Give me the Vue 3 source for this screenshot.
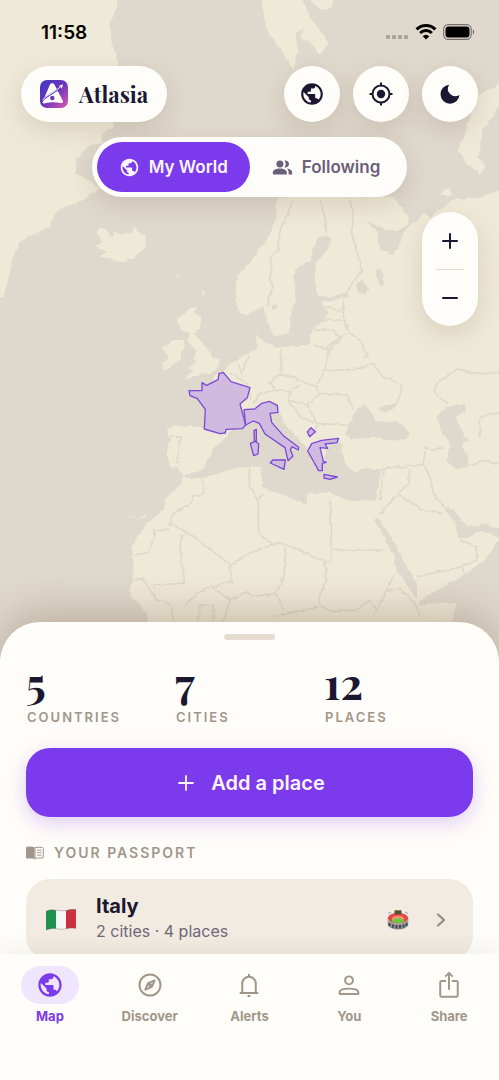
<template>
  <div class="screen">
    <main class="stage">
      <svg class="map" viewBox="0 0 1497 1980" preserveAspectRatio="xMidYMin slice" aria-hidden="true">
        <defs>
          <filter id="coast" x="-5%" y="-5%" width="110%" height="110%" color-interpolation-filters="sRGB">
            <feTurbulence type="fractalNoise" baseFrequency="0.05" numOctaves="2" seed="4" />
            <feDisplacementMap in="SourceGraphic" scale="12" xChannelSelector="R" yChannelSelector="G" />
            <feGaussianBlur stdDeviation="1.2" />
          </filter>
        </defs>
        <rect class="sea" width="1497" height="1980" />
        <g filter="url(#coast)">
          <polygon v-for="(p, i) in land" :key="'l' + i" class="land" :points="p" />
          <polygon v-for="(p, i) in water" :key="'w' + i" class="sea" :points="p" />
          <polyline v-for="(p, i) in borders" :key="'b' + i" class="border" :points="p" />
        </g>
        <g transform="translate(540 1080)">
          <polygon v-for="(p, i) in visited" :key="'v' + i" class="visited" :points="p" />
        </g>
      </svg>

      <div class="status">
        <span class="time">11:58</span>
        <span class="signals">
          <svg width="23" height="16" viewBox="0 0 23 16" aria-hidden="true">
            <g fill="#aaa398">
              <rect x="0" y="11" width="4" height="4" rx="1" />
              <rect x="6" y="11" width="4" height="4" rx="1" />
              <rect x="12" y="11" width="4" height="4" rx="1" />
              <rect x="18" y="11" width="4" height="4" rx="1" />
            </g>
          </svg>
          <svg width="22" height="16" viewBox="0 0 22 16" fill="none" stroke="#000" stroke-width="3" aria-hidden="true">
            <path d="M1.6 5.4a13.5 13.5 0 0 1 18.8 0" />
            <path d="M5.1 9a8.5 8.5 0 0 1 11.8 0" />
            <path d="M11 15.6 7.7 12.2a4.8 4.8 0 0 1 6.6 0z" fill="#000" stroke="none" />
          </svg>
          <svg width="32" height="16" viewBox="0 0 32 16" aria-hidden="true">
            <rect x="0.6" y="0.6" width="27.6" height="14.8" rx="4.6" fill="none" stroke="#77726a" stroke-width="1.1" />
            <rect x="2.5" y="2.5" width="24" height="11" rx="3" />
            <path d="M29.8 5.6c2 .7 2 4.1 0 4.8z" fill="#77726a" />
          </svg>
        </span>
      </div>

      <header class="topbar">
        <div class="brand">
          <svg width="28" height="28" viewBox="0 0 28 28" aria-hidden="true">
            <defs>
              <linearGradient id="logo" x1="0" y1="0" x2="1" y2="1">
                <stop offset="0" stop-color="#4038c4" />
                <stop offset="0.5" stop-color="#6b35ba" />
                <stop offset="1" stop-color="#e05ab0" />
              </linearGradient>
            </defs>
            <rect width="28" height="28" rx="7" fill="url(#logo)" />
            <path d="M10 4.5q2.2-3 4.4 0l8.2 15.8q1.2 3-1.7 2.8-3.8-.9-9-.8-4.7.2-7.6 1.3-2.4 0-1.3-2.7z" fill="#fff" />
            <path d="M1.5 21.5C6 15.5 13 14 20.500 7.500" fill="none" stroke="#5537bd" stroke-width="1.8" />
            <path d="M2.500 20C7 14.500 14 13 20.800 6.600" fill="none" stroke="#fff" stroke-width="0.9" />
            <path d="m18.700 6 4.300-1.700-1.200 4.500-1.100-1.800z" fill="#fff" />
            <circle cx="12.300" cy="18" r="2.200" fill="#6336ba" />
          </svg>
          <span class="brand-name">Atlasia</span>
        </div>
        <div class="actions">
          <button class="round" aria-label="Globe">
            <svg width="26" height="26" viewBox="0 0 24 24"><path :d="globe" /></svg>
          </button>
          <button class="round" aria-label="Locate me">
            <svg width="24" height="24" viewBox="0 0 24 24" fill="none" stroke="currentColor" stroke-width="2">
              <circle cx="12" cy="12" r="8.5" />
              <circle cx="12" cy="12" r="4.2" fill="currentColor" stroke="none" />
              <path d="M12 .5v3M12 20.500v3M.5 12h3M20.500 12h3" />
            </svg>
          </button>
          <button class="round" aria-label="Dark mode">
            <svg width="24" height="24" viewBox="0 0 24 24">
              <path d="M11.2 2.700a7.400 7.400 0 0 0 10.300 10.200A9.500 9.500 0 1 1 11.200 2.700z" />
            </svg>
          </button>
        </div>
      </header>

      <div class="segment">
        <button :class="['tab', { on: tab === 'world' }]" @click="tab = 'world'">
          <svg width="21" height="21" viewBox="0 0 24 24"><path :d="globe" /></svg>
          My World
        </button>
        <button :class="['tab', { on: tab === 'following' }]" @click="tab = 'following'">
          <svg width="21" height="21" viewBox="0 0 24 24">
            <circle cx="9" cy="8" r="4" />
            <path d="M14.200 4.200a4 4 0 1 1 0 7.600 6 6 0 0 0 0-7.600zM9 13c-3.500 0-8 1.500-8 4.500V19q0 1 1 1h14q1 0 1-1v-1.500C17 14.500 12.500 13 9 13zM17 13.200c3.500.6 6 2 6 4.300V19q0 1-1 1h-3.200q.2-.4.2-2.500 0-2.600-2-4.300z" />
          </svg>
          Following
        </button>
      </div>

      <div class="zoom">
        <button aria-label="Zoom in" @click="zoomIn">
          <svg width="24" height="24" viewBox="0 0 24 24"><path class="line" d="M12 5v14M5 12h14" /></svg>
        </button>
        <span class="rule"></span>
        <button aria-label="Zoom out" @click="zoomOut">
          <svg width="24" height="24" viewBox="0 0 24 24"><path class="line" d="M5 12h14" /></svg>
        </button>
      </div>
    </main>

    <section class="sheet">
      <div class="handle"></div>
      <div class="stats">
        <div v-for="s in stats" :key="s.label" class="stat">
          <span class="value">{{ s.value }}</span>
          <span class="label">{{ s.label }}</span>
        </div>
      </div>

      <button class="add">
        <svg width="24" height="24" viewBox="0 0 24 24" fill="none" stroke="currentColor" stroke-width="1.8" stroke-linecap="round">
          <path d="M12 5v14M5 12h14" />
        </svg>
        Add a place
      </button>

      <h2 class="heading">
        <svg width="18" height="14" viewBox="0 0 18 14" aria-hidden="true">
          <path d="M1 .8Q5 .3 8.500 1.200V13.600Q7.500 12.600 6 12.600H1q-1 0-1-1V1.800q0-1 1-1z" fill="currentColor" />
          <path d="M9 1.700Q12.500.9 16.400 1.400q.9.100.9.900v8.800q0 .9-.9.900h-5Q10 12 9 13.200z" fill="none" stroke="currentColor" />
          <path d="M11 4.200h4.500M11 6.700h4.500M11 9.200h4.500" stroke="currentColor" />
        </svg>
        YOUR PASSPORT
      </h2>

      <button class="card">
        <svg width="30" height="22" viewBox="0 0 30 22" role="img" aria-label="Flag of Italy">
          <path d="M0 2.200Q5 0 10 1.200v18.400Q5 18.800 0 21z" fill="#1c9150" />
          <path d="M10 1.200q5 1.300 10 .3v18.200q-5 1.200-10-.1z" fill="#f7f7f5" />
          <path d="M20 1.500Q25-.3 30 .5v18.800q-5-1-10 .4z" fill="#cd2f3f" />
          <path d="M0 2.200Q5 0 10 1.200t10 .3T30 .5v18.800q-5-1-10 .4t-10-.1T0 21z" fill="none" stroke="#6f6f6a" stroke-opacity="0.5" stroke-width="0.8" />
        </svg>
        <span class="info">
          <span class="country">Italy</span>
          <span class="detail">2 cities · 4 places</span>
        </span>
        <svg class="stadium" width="22" height="20" viewBox="0 0 22 20" role="img" aria-label="Stadium">
          <path d="M.8 9h20.400v6.500Q18 19.500 11 19.500T.8 15.500z" fill="#8d9098" />
          <path d="M2.500 13v3M6 14.500v3.300M9.500 15v3.500M13 15v3.500M16.500 14.500v3M19.500 13v3" stroke="#3d4149" stroke-width="1.7" />
          <ellipse cx="11" cy="8.5" rx="10.6" ry="6" fill="#b9bcc0" />
          <ellipse cx="11" cy="8.2" rx="10" ry="5.2" fill="#e8473d" />
          <ellipse cx="11" cy="9" rx="6" ry="3.2" fill="#f3947c" />
          <ellipse cx="11" cy="10.8" rx="6.3" ry="2.5" fill="#6cc93e" />
          <path d="M1 3.500 4 2M21 3.500 18 2" stroke="#8fa8b8" />
          <rect x="7.5" y="0.3" width="7" height="4" fill="#55542f" />
        </svg>
        <svg class="chevron" width="12" height="16" viewBox="0 0 12 16" fill="none" stroke="currentColor" stroke-width="2.2" stroke-linecap="round" stroke-linejoin="round">
          <path d="m3 2.500 6 5.500-6 5.500" />
        </svg>
      </button>
    </section>

    <nav class="nav">
      <a
        v-for="item in items"
        :key="item.name"
        href="#"
        :class="['item', { active: item.name === page }]"
        @click.prevent="page = item.name"
      >
        <span class="pill">
          <svg width="28" height="28" viewBox="0 0 24 24">
            <path :class="{ outline: !item.filled }" :d="item.icon" />
          </svg>
        </span>
        {{ item.name }}
      </a>
    </nav>
  </div>
</template>

<script setup>
import { ref } from 'vue'

const tab = ref('world')
const page = ref('Map')
const level = ref(3)

const zoomIn = () => {
  level.value++
}

const zoomOut = () => {
  level.value--
}

const stats = [
  { value: 5, label: 'COUNTRIES' },
  { value: 7, label: 'CITIES' },
  { value: 12, label: 'PLACES' }
]

const globe =
  'M12 2C6.48 2 2 6.48 2 12s4.48 10 10 10 10-4.48 10-10S17.52 2 12 2zm-1 17.93c-3.95-.49-7-3.85-7-7.93 0-.62.08-1.21.21-1.79L9 15v1c0 1.1.9 2 2 2v1.93zm6.9-2.54c-.26-.81-1-1.39-1.9-1.39h-1v-3c0-.55-.45-1-1-1H8v-2h2c.55 0 1-.45 1-1V7h2c1.1 0 2-.9 2-2v-.41c2.93 1.19 5 4.06 5 7.41 0 2.08-.8 3.97-2.1 5.39z'

const items = [
  { name: 'Map', icon: globe, filled: true },
  {
    name: 'Discover',
    icon: 'M12 3a9 9 0 1 0 0 18 9 9 0 1 0 0-18M16 8l-2.400 5.600-5.600 2.400 2.400-5.600zM12 11.200a.8.8 0 1 0 0 1.600.8.8 0 1 0 0-1.600'
  },
  {
    name: 'Alerts',
    icon: 'M4 18.800h16M6.200 18.500V10.800a5.800 5.800 0 0 1 11.600 0V18.500M10.800 21.400h2.400M12 2.500v2'
  },
  {
    name: 'You',
    icon: 'M12 4.600a3.400 3.400 0 1 0 0 6.800 3.400 3.400 0 1 0 0-6.800M4 19.800v-1.700c0-4 16-4 16 0v1.700z'
  },
  {
    name: 'Share',
    icon: 'M9.500 8.500H5.500q-1 0-1 1V21q0 1 1 1h13q1 0 1-1V9.500q0-1-1-1h-4M12 16V2.500M8.800 4.800 12 1.600l3.200 3.200'
  }
]

// outlines on a 1497 x 1980 canvas
const land = [
  // Greenland
  '-30,-30 352,-30 352,0 345,35 328,70 335,130 355,190 340,380 305,400 310,430 270,435 230,480 225,520 265,540 300,565 250,600 170,630 150,680 130,690 60,725 40,770 25,840 10,890 -30,900',
  // Iceland
  '285,697 305,680 325,697 325,715 345,695 365,705 395,695 402,680 415,695 438,710 437,740 405,770 362,788 335,777 303,770 320,755 285,738 312,725',
  // Great Britain and Ireland
  '560,935 590,918 583,940 605,950 600,985 580,1000 605,1025 630,1055 637,1075 658,1078 655,1105 630,1120 600,1125 556,1140 580,1115 565,1100 590,1085 580,1075 590,1050 575,1040 560,1025 570,1000 545,990 530,960',
  '520,1020 550,1020 550,1040 540,1080 495,1110 485,1095 505,1075 485,1040 510,1035',
  // Svalbard and Novaya Zemlya
  '785,-20 910,-20 910,0 930,50 985,130 960,165 935,130 900,110 915,80 885,100 895,150 880,210 830,130 800,90 790,40',
  '905,-20 1005,-20 995,25 960,28',
  '1530,235 1430,290 1400,380 1375,450 1400,490 1440,525 1455,500 1435,470 1450,390 1497,320 1530,300',
  '1320,580 1350,565 1357,585 1330,600',
  // Europe, Asia and Africa
  '830,600 870,585 1190,590 1290,650 1350,600 1440,590 1530,560 1530,1615 1490,1630 1455,1680 1400,1720 1350,1750 1260,1800 1258,1815 1370,1805 1360,1850 1330,1910 1310,2010 460,2010 440,1835 400,1800 388,1770 400,1740 400,1690 395,1640 440,1570 490,1530 495,1500 545,1450 548,1425 535,1405 510,1400 500,1360 510,1320 500,1285 520,1278 625,1282 640,1190 640,1130 660,1120 700,1085 745,1060 772,1045 765,980 745,945 720,940 705,900 710,830 750,785 800,720 830,650',
  // small islands
  '525,825 538,820 535,832',
  '608,870 618,870 612,890',
  '668,1352 682,1348 678,1362',
  '385,1552 400,1548 400,1556 430,1552 438,1546 435,1558'
]

const water = [
  // Baltic Sea
  '940,740 960,705 995,715 985,745 960,775 945,790 945,840 952,890 1000,890 1040,875 1050,888 1000,900 965,905 985,940 965,965 935,990 930,1032 860,1042 830,1040 790,1030 770,1000 750,1040 740,950 750,940 790,920 800,960 822,1010 868,1000 875,930 888,900 882,830 895,800 930,780',
  // White Sea and lakes
  '1180,590 1290,590 1275,640 1240,670 1210,700 1200,730 1180,765 1140,745 1132,720 1135,700 1100,665 1150,685 1190,694 1225,675 1225,650',
  '1290,650 1275,620 1300,585 1370,590 1330,620',
  '1070,850 1085,840 1105,865 1095,885 1072,875',
  '1130,810 1140,805 1155,850 1145,860 1132,835',
  '812,915 835,910 830,925 818,930',
  // Mediterranean
  '550,1425 600,1412 632,1370 640,1345 680,1310 690,1290 740,1268 800,1240 840,1240 850,1270 900,1320 925,1350 935,1385 960,1405 990,1330 1025,1325 1025,1360 1040,1395 1060,1415 1100,1405 1145,1408 1138,1440 1128,1500 1055,1505 990,1478 925,1480 918,1512 860,1490 790,1462 785,1430 785,1400 760,1400 700,1405 620,1432 575,1435',
  // Black Sea, Azov, Caspian
  '1035,1305 1050,1265 1070,1230 1095,1215 1115,1240 1125,1260 1150,1270 1190,1262 1230,1300 1220,1315 1170,1322 1120,1310 1060,1318',
  '1135,1222 1190,1205 1180,1230 1150,1238',
  '1310,1250 1340,1220 1395,1210 1395,1235 1365,1250 1385,1290 1405,1320 1385,1340 1405,1370 1405,1400 1370,1408 1340,1385 1350,1330 1325,1295',
  // Red Sea and Persian Gulf
  '1100,1525 1125,1565 1180,1660 1190,1710 1252,1800 1250,1750 1220,1700 1200,1660 1160,1590 1135,1555 1122,1560',
  '1330,1520 1360,1530 1400,1580 1440,1578 1450,1570 1530,1600 1530,1640 1480,1605 1440,1592 1400,1615 1375,1615 1365,1570'
]

const borders = [
  '880,605 840,690 835,750 815,770 810,840 820,860 800,920',
  '960,600 975,650 980,700',
  '1050,600 1060,650 1055,700 1085,810 1040,875',
  '1030,890 1030,960 1050,1000 1080,1020 1105,1075 1090,1070',
  '975,920 1025,935',
  '945,960 1030,960',
  '940,990 1000,990 1020,1010 980,1045 940,1035',
  '1040,1000 985,1050 975,1110 1060,1110 1090,1100 1120,1090',
  '1120,1090 1150,1130 1210,1155 1190,1210',
  '840,1045 845,1120 950,1160 970,1110',
  '845,1120 810,1145 825,1170 870,1175 900,1155',
  '870,1175 865,1200 920,1215 960,1180 950,1160',
  '960,1180 1040,1185 1060,1230',
  '920,1215 950,1270 1040,1275',
  '865,1200 900,1250 950,1270 945,1300',
  '825,1170 780,1180 760,1210',
  '690,1120 740,1150 750,1200',
  '715,1090 725,1120 745,1070',
  '1340,1210 1305,1180 1310,1150 1365,1110 1430,1120 1510,1120',
  '1440,1310 1440,1250 1510,1235',
  '510,1310 543,1312 535,1350 530,1390',
  '605,1435 612,1480 580,1490 570,1510 515,1545 510,1575',
  '510,1570 575,1605 690,1695 750,1660 830,1630',
  '510,1588 462,1590 460,1625 445,1658 400,1665',
  '545,1605 540,1640 553,1750 465,1755 460,1765',
  '555,1600 540,1605',
  '400,1740 430,1735 470,1800 510,1810 520,1860',
  '690,1695 695,1745 635,1760 590,1780 555,1820',
  '635,1760 690,1800 740,1775 750,1785',
  '690,1800 665,1880',
  '595,1860 600,1815 640,1815 640,1870',
  '750,1400 745,1450 775,1500 775,1600 820,1635 850,1630',
  '775,1500 790,1480',
  '992,1500 995,1650 990,1685 975,1685 855,1632',
  '995,1650 1150,1650',
  '975,1685 980,1740 955,1790 965,1820 1000,1835 1070,1830 1110,1800 1130,1830',
  '855,1632 855,1710 830,1780 850,1830',
  '750,1790 830,1780',
  '820,1850 870,1840 955,1820',
  '1185,1720 1160,1770 1120,1850',
  '1160,1770 1200,1765 1245,1810 1260,1850',
  '1145,1405 1270,1395 1275,1350',
  '1140,1500 1150,1410',
  '1140,1540 1195,1480 1225,1450 1230,1405',
  '1195,1485 1270,1530 1325,1540',
  '1270,1395 1290,1430 1300,1480 1330,1520',
  '1270,1340 1300,1350 1330,1340',
  '1405,1400 1450,1380 1510,1395',
  '1250,1730 1320,1715 1385,1700 1395,1730',
  '1385,1700 1430,1680 1430,1640 1380,1620'
]

const visited = [
  // France
  '27,92 66,92 66,68 80,76 114,59 117,41 130,37 153,65 210,83 202,113 180,132 197,195 187,206 138,208 136,219 120,221 73,207 76,148 52,116 30,107',
  // Italy
  '192,149 224,147 245,130 268,124 292,136 294,157 270,160 275,187 312,229 356,262 355,270 336,260 331,270 339,288 324,302 315,263 255,222 238,190 220,183 197,195',
  '222,212 229,208 229,245 223,243',
  '211,250 226,244 236,252 234,282 221,287',
  '271,309 278,300 316,300 312,328',
  // Balkans and Greece
  '382,216 393,203 406,215 389,230',
  '383,273 395,251 425,241 476,235 471,248 435,252 443,265 420,263 430,304 439,307 427,310 427,332 416,332',
  '432,343 472,351 450,358 432,354'
]
</script>

<style>
body {
  margin: 0;
  background: #fffdf9;
}
</style>

<style scoped>
.screen {
  min-height: 100vh;
  display: flex;
  flex-direction: column;
  overflow: hidden;
  color: #1c1730;
  font-family: Inter, "Liberation Sans", sans-serif;
  font-optical-sizing: none;
}

button {
  border: none;
  padding: 0;
  color: inherit;
  background: none;
  font-family: inherit;
  font-optical-sizing: inherit;
  cursor: pointer;
}

svg {
  display: block;
  flex: none;
}

svg:not([fill]) {
  fill: currentColor;
}

.stage {
  position: relative;
  flex: 1;
  padding: 0 21px;
}

.map {
  position: absolute;
  top: 0;
  left: 0;
  width: 100%;
  height: calc(100% + 36px);
}

.sea {
  fill: #dfd8cc;
}

.land {
  fill: #efe9d8;
}

.border {
  fill: none;
  stroke: #e0d9c9;
  stroke-width: 5;
}

.visited {
  fill: #d1bae0;
  stroke: #7c4ad4;
  stroke-width: 4;
  stroke-linejoin: round;
}

.status,
.topbar,
.segment,
.zoom {
  position: relative;
}

.status {
  display: flex;
  align-items: center;
  justify-content: space-between;
  height: 64px;
  padding: 0 3px 0 20px;
}

.time {
  color: #000;
  font-size: 19px;
  font-weight: 600;
}

.signals {
  display: flex;
  align-items: center;
  gap: 6px;
  color: #000;
}

.topbar {
  display: flex;
  justify-content: space-between;
  margin-top: 2px;
}

.brand,
.round,
.segment,
.zoom {
  background: #fffdfa;
  box-shadow: 0 8px 24px rgba(90, 65, 40, 0.15);
}

.brand {
  display: flex;
  align-items: center;
  gap: 11px;
  height: 56px;
  padding: 0 19px;
  border-radius: 28px;
}

.brand-name {
  font-family: "Playfair Display", "Liberation Serif", serif;
  font-size: 22px;
  font-weight: 700;
}

.actions {
  display: flex;
  gap: 13px;
}

.round {
  display: flex;
  align-items: center;
  justify-content: center;
  width: 56px;
  height: 56px;
  border-radius: 50%;
}

.segment {
  display: flex;
  width: fit-content;
  margin: 15px auto 0;
  padding: 5px;
  border-radius: 30px;
}

.tab {
  display: flex;
  align-items: center;
  gap: 9px;
  height: 50px;
  padding: 0 22px;
  border-radius: 25px;
  color: #6b6078;
  font-size: 17px;
  font-weight: 600;
}

.tab.on {
  color: #fbf5ff;
  background: #7c3aed;
}

.zoom {
  display: flex;
  flex-direction: column;
  align-items: center;
  width: 56px;
  margin: 15px 0 0 auto;
  border-radius: 28px;
}

.zoom button {
  display: flex;
  align-items: center;
  justify-content: center;
  width: 56px;
  height: 57px;
}

.line {
  fill: none;
  stroke: currentColor;
  stroke-width: 2;
  stroke-linecap: round;
}

.rule {
  width: 28px;
  height: 1px;
  margin-bottom: -1px;
  background: #e6dacd;
}

.sheet {
  position: relative;
  display: flex;
  flex-direction: column;
  padding: 12px 26px 0;
  border-radius: 40px 40px 0 0;
  background: #fffdf9;
  box-shadow: 0 -8px 40px rgba(90, 60, 35, 0.28);
}

.handle {
  align-self: center;
  width: 51px;
  height: 6px;
  border-radius: 3px;
  background: #e6dccf;
}

.stats {
  display: grid;
  grid-template-columns: repeat(3, 1fr);
  margin-top: 22px;
}

.stat {
  display: flex;
  flex-direction: column;
}

.value {
  font-family: "Playfair Display", "Liberation Serif", serif;
  font-size: 43px;
  font-weight: 700;
  line-height: 40px;
}

.label {
  margin-top: 7px;
  padding-left: 1px;
  color: #a0978a;
  font-size: 13px;
  font-weight: 600;
  line-height: 17px;
  letter-spacing: 2px;
}

.add {
  display: flex;
  align-items: center;
  justify-content: center;
  gap: 13px;
  height: 69px;
  margin-top: 22px;
  border-radius: 24px;
  color: #fbf5ff;
  background: #7c3aed;
  box-shadow: 0 6px 20px rgba(124, 58, 237, 0.25);
  font-size: 20px;
  font-weight: 600;
}

.heading {
  display: flex;
  align-items: center;
  gap: 10px;
  margin: 26px 0 16px;
  color: #a0978a;
  font-size: 14px;
  font-weight: 600;
  line-height: 20px;
  letter-spacing: 2px;
}

.card {
  display: flex;
  align-items: center;
  height: 81px;
  padding: 0 26px 0 20px;
  border-radius: 24px;
  background: #f2ebe1;
  text-align: left;
}

.info {
  display: flex;
  flex: 1;
  flex-direction: column;
  margin-left: 20px;
  padding-bottom: 4px;
}

.country {
  font-size: 20px;
  font-weight: 700;
  line-height: 26px;
  font-optical-sizing: auto;
}

.detail {
  color: #716779;
  font-size: 16px;
  font-weight: 400;
  line-height: 24px;
}

.stadium {
  margin-right: 26px;
}

.chevron {
  color: #968b80;
}

.nav {
  position: relative;
  display: grid;
  grid-template-columns: repeat(5, 1fr);
  margin-top: -6px;
  padding: 12px 0 55px;
  background: #fffdf9;
  box-shadow: 0 -4px 20px rgba(60, 50, 40, 0.07);
}

.item {
  display: flex;
  flex-direction: column;
  align-items: center;
  gap: 3px;
  color: #a0978a;
  font-size: 13px;
  font-weight: 700;
  line-height: 18px;
  text-decoration: none;
}

.pill {
  display: flex;
  align-items: center;
  justify-content: center;
  width: 58px;
  height: 38px;
  border-radius: 19px;
}

.outline {
  fill: none;
  stroke: currentColor;
  stroke-width: 1.7;
  stroke-linejoin: round;
}

.item.active {
  color: #7c3aed;
}

.item.active .pill {
  background: #efe5fd;
}
</style>
